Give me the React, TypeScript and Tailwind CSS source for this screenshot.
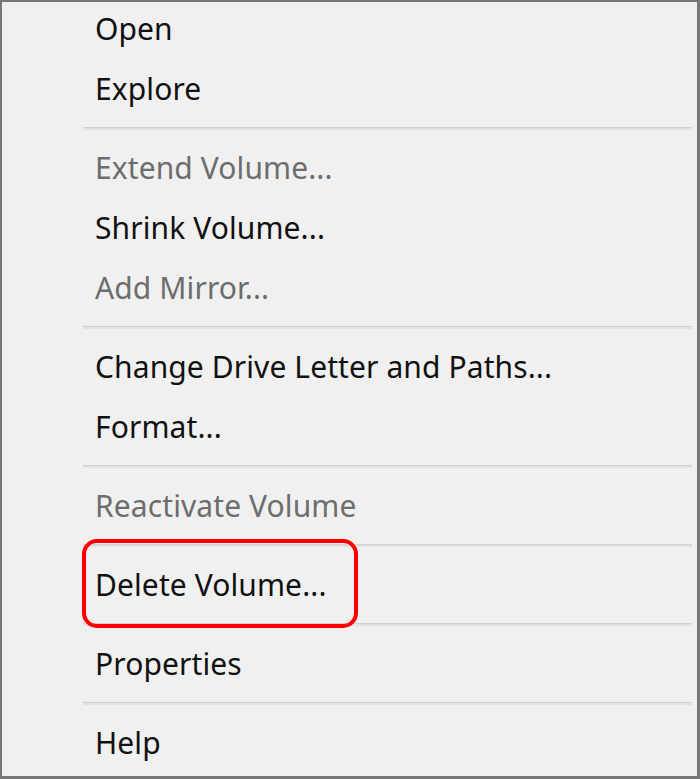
type Entry = { label: string; disabled?: boolean; marked?: boolean } | "sep";

const entries: Entry[] = [
  { label: "Open" },
  { label: "Explore" },
  "sep",
  { label: "Extend Volume...", disabled: true },
  { label: "Shrink Volume..." },
  { label: "Add Mirror...", disabled: true },
  "sep",
  { label: "Change Drive Letter and Paths..." },
  { label: "Format..." },
  "sep",
  { label: "Reactivate Volume", disabled: true },
  "sep",
  { label: "Delete Volume...", marked: true },
  "sep",
  { label: "Properties" },
  "sep",
  { label: "Help" },
];

function Separator() {
  return (
    <div className="flex h-[19px] items-center pl-[81px] pr-[5px]">
      <div className="h-[3px] w-full border-t border-[#d0d0d0] bg-[#e2e2e2]" />
    </div>
  );
}

function MenuItem({ label, disabled, marked }: { label: string; disabled?: boolean; marked?: boolean }) {
  return (
    <div className="relative flex h-[60px] items-center pl-[93px]">
      <span className={disabled ? "text-[#6d6d6d]" : "text-[#111]"}>{label}</span>
      {marked && (
        <div className="absolute left-[80px] top-[-16px] h-[89px] w-[276px] rounded-[15px] border-4 border-[#ff0000]" />
      )}
    </div>
  );
}

export default function App() {
  return (
    <div
      className="h-[779px] w-[700px] overflow-hidden border-b-[3px] border-l-2 border-r-[3px] border-t-2 border-[#777] bg-[#f0f0f0] text-[30px] leading-none tracking-[0.1px]"
      style={{ fontFamily: '"Noto Sans", "Open Sans", sans-serif' }}
    >
      <div className="mt-[-3px] flex flex-col">
        {entries.map((e, i) =>
          e === "sep" ? <Separator key={i} /> : <MenuItem key={i} {...e} />
        )}
      </div>
    </div>
  );
}
